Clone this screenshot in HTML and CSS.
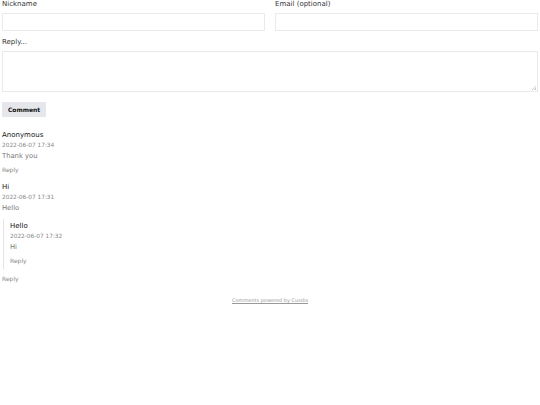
FILE: index.html
```html
<!DOCTYPE html>
<html>
<head>
<meta charset="utf-8">
<link rel="stylesheet" href="styles.css">
</head>
<body>
<div class="widget">
  <div class="row">
    <div class="field">
      <label class="label">Nickname</label>
      <input class="input" type="text">
    </div>
    <div class="field">
      <label class="label">Email (optional)</label>
      <input class="input" type="text">
    </div>
  </div>
  <div class="field reply-field">
    <label class="label">Reply...</label>
    <div class="ta-wrap">
      <textarea class="textarea"></textarea>
    </div>
  </div>
  <div class="actions">
    <button class="btn">Comment</button>
  </div>

  <div class="comments">
    <div class="comment">
      <div class="author">Anonymous</div>
      <div class="date">2022-06-07 17:34</div>
      <div class="content">Thank you</div>
      <div class="reply-link">Reply</div>
    </div>
    <div class="comment last">
      <div class="author">Hi</div>
      <div class="date">2022-06-07 17:31</div>
      <div class="content">Hello</div>
      <div class="children">
        <div class="comment child">
          <div class="author">Hello</div>
          <div class="date">2022-06-07 17:32</div>
          <div class="content">Hi</div>
          <div class="reply-link">Reply</div>
        </div>
      </div>
      <div class="reply-link">Reply</div>
    </div>
  </div>

  <div class="footer"><a class="powered">Comments powered by Cusdis</a></div>
</div>
</body>
</html>
```
FILE: styles.css
```css
* { box-sizing: border-box; }
html, body { margin: 0; padding: 0; background: #fff; }
body {
  font-family: "DejaVu Sans", sans-serif;
  color: #111;
}
.widget { padding: 0 2px; }
.row {
  display: grid;
  grid-template-columns: 1fr 1fr;
  column-gap: 10px;
}
.field { display: flex; flex-direction: column; }
.label {
  font-size: 7px;
  line-height: 9px;
  color: #333;
  margin-bottom: 4px;
}
.input {
  display: block;
  height: 18px;
  border: 1px solid #eaeaea;
  outline: none;
  background: #fff;
  margin: 0;
}
.reply-field { margin-top: 7px; }
.ta-wrap { position: relative; }
.ta-wrap::after {
  content: "";
  position: absolute;
  right: 2px;
  bottom: 2px;
  width: 4px;
  height: 4px;
  background: linear-gradient(135deg, transparent 0 45%, #ccc 45% 60%, transparent 60% 75%, #ccc 75% 90%, transparent 90%);
}
.textarea {
  display: block;
  height: 41px;
  border: 1px solid #eaeaea;
  margin: 0;
  resize: none;
  width: 100%;
  outline: none;
}
.actions { margin-top: 10px; }
.btn {
  display: block;
  font-family: "DejaVu Sans", sans-serif;
  font-weight: bold;
  font-size: 6px;
  height: 15px;
  width: 44px;
  padding: 0;
  border: none;
  background: #e5e7eb;
  color: #111;
  border-radius: 1px;
}
.comments { margin-top: 14px; }
.comment { margin-bottom: 9px; }
.comment.last { margin-bottom: 4px; }
.author { font-size: 7px; line-height: 9px; color: #111; }
.date { font-size: 5.8px; line-height: 8px; color: #888; margin-top: 1px; }
.content { font-size: 6.8px; line-height: 9px; color: #777; margin-top: 3px; }
.reply-link { font-size: 6px; line-height: 8px; color: #888; margin-top: 5px; }
.children {
  margin-top: 6px;
  margin-left: 1px;
  border-left: 1px solid #e5e5e5;
  padding-left: 6px;
  padding-top: 3px;
  padding-bottom: 5px;
  margin-bottom: 5px;
}
.comment.child { margin-bottom: 0; }
.footer { text-align: center; margin-top: 0; }
.powered {
  font-size: 5px;
  color: #999;
  text-decoration: underline;
}
```
